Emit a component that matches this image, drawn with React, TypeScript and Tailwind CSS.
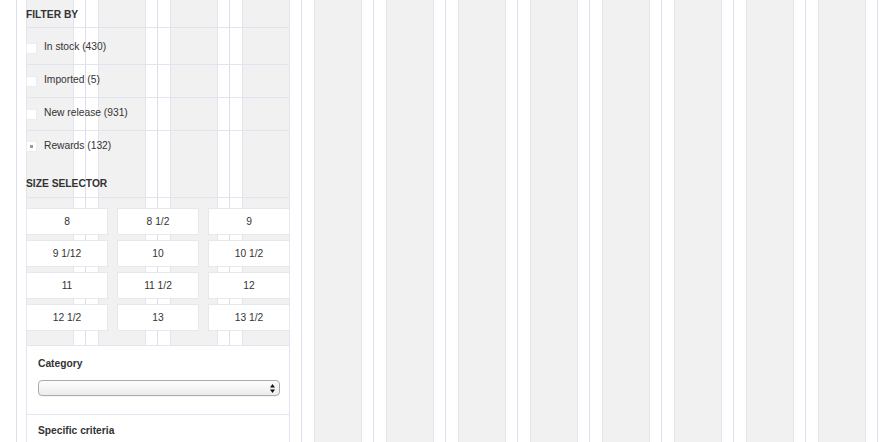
import React from "react";

const filters = [
  { label: "In stock (430)", checked: false },
  { label: "Imported (5)", checked: false },
  { label: "New release (931)", checked: false },
  { label: "Rewards (132)", checked: true },
];

const sizes = ["8", "8 1/2", "9", "9 1/12", "10", "10 1/2", "11", "11 1/2", "12", "12 1/2", "13", "13 1/2"];

function GridColumn({ first }: { first?: boolean }) {
  return (
    <div className={`h-full shrink-0 border-l border-[#dcdef0] ${first ? "w-[69px] pl-[9px]" : "w-[72px] pl-[12px]"}`}>
      <div className="h-full w-[48px] bg-[#f1f1f1] border-x border-[#e4e4ec]" />
    </div>
  );
}

function Checkbox({ checked }: { checked: boolean }) {
  return (
    <div className="w-[11px] h-[11px] bg-white border border-[#ececf0] flex items-center justify-center translate-y-[1px] shrink-0">
      {checked && <div className="w-[3px] h-[3px] bg-[#9a9a9a]" />}
    </div>
  );
}

export default function App() {
  return (
    <div className="relative w-[894px] h-[442px] overflow-hidden bg-white font-['Liberation_Sans',Arial,sans-serif] text-[10.25px] text-[#333]">
      {/* grid overlay background */}
      <div className="absolute inset-0 flex pl-[16px] pointer-events-none">
        <GridColumn first />
        {Array.from({ length: 11 }).map((_, i) => (
          <GridColumn key={i} />
        ))}
        <div className="h-full flex-1 border-l border-[#dcdef0]" />
      </div>

      {/* content */}
      <div className="relative pl-[26px]">
        <aside className="w-[264px] flex flex-col">
          <div className="h-[28px] flex items-center pt-[2px] border-b border-[#e2e4f0] font-bold uppercase">
            Filter by
          </div>
          {filters.map((f, i) => (
            <div
              key={f.label}
              className={`flex items-center gap-[7px] ${
                i === 0
                  ? "h-[37px] pt-[2px] border-b border-[#e2e4f0]"
                  : i === filters.length - 1
                  ? "h-[33px] pb-[4px]"
                  : "h-[33px] pb-[2px] border-b border-[#e2e4f0]"
              }`}
            >
              <Checkbox checked={f.checked} />
              <span>{f.label}</span>
            </div>
          ))}
          <div className="h-[34px] flex items-center pt-[6px] border-b border-[#e2e4f0] font-bold uppercase">
            Size selector
          </div>
          <div className="mt-[10px] grid grid-cols-3 gap-x-[9px] gap-y-[5px]">
            {sizes.map((s) => (
              <div
                key={s}
                className="h-[27px] bg-white border border-[#e6e7ef] flex items-center justify-center"
              >
                {s}
              </div>
            ))}
          </div>
          <div className="mt-[14px] h-[200px] bg-white border border-[#e2e4f0]">
            <div className="px-[11px] pt-[11px] pb-[18px] border-b border-[#e2e4f0]">
              <div className="leading-[14px] font-bold">Category</div>
              <div className="mt-[9px] w-[242px] h-[16px] rounded-[4px] border border-[#ababab] bg-gradient-to-b from-[#fdfdfd] to-[#ececec] shadow-[0_1px_0_rgba(0,0,0,0.04)] flex items-center justify-end pr-[4px]">
                <svg width="5" height="9" viewBox="0 0 5 9">
                  <path d="M2.5 0 L5 3.5 L0 3.5 Z" fill="#111" />
                  <path d="M0 5.5 L5 5.5 L2.5 9 Z" fill="#111" />
                </svg>
              </div>
            </div>
            <div className="px-[11px] pt-[9px]">
              <div className="leading-[14px] font-bold">Specific criteria</div>
            </div>
          </div>
        </aside>
      </div>
    </div>
  );
}
